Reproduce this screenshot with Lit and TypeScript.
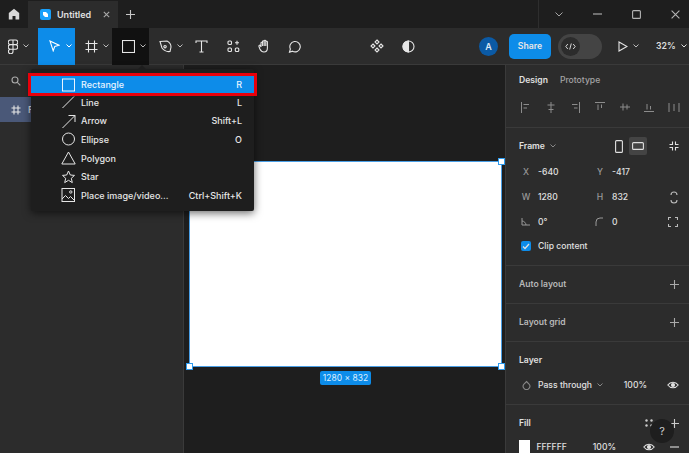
import { LitElement, html, css, svg } from 'lit';
import { customElement } from 'lit/decorators.js';

const icon = (w: number, h: number, body: unknown, sw = 1.1) => html`<svg
    width=${w}
    height=${h}
    viewBox="0 0 ${w} ${h}"
    fill="none"
    stroke="currentColor"
    stroke-width=${sw}
    aria-hidden="true"
>${body}</svg>`;

const chevron = html`<svg class="chev" width="6" height="4" viewBox="0 0 6 4" fill="none" stroke="currentColor" stroke-width="1"><path d="M.5.5 3 3 5.5.5" /></svg>`;

const plus = svg`<path d="M4.500 0v9M0 4.500h9" />`;
const eye = svg`<path d="M.8 4C3.500.3 8.500.3 11.200 4 8.500 7.700 3.500 7.700.8 4Z" /><circle cx="6" cy="4" r="1.500" fill="currentColor" />`;

const menuItems = [
    { label: 'Rectangle', key: 'R', icon: svg`<rect x="1.500" y="2" width="12" height="12" />` },
    { label: 'Line', key: 'L', icon: svg`<path d="M1.500 14 13 2.500" />` },
    { label: 'Arrow', key: 'Shift+L', icon: svg`<path d="M1.500 15 14 2.500M7.500 2.500H14V9" />` },
    { label: 'Ellipse', key: 'O', icon: svg`<circle cx="7.500" cy="8" r="6" />` },
    { label: 'Polygon', key: '', icon: svg`<path d="M7.500 2 14.200 14H.8Z" />` },
    { label: 'Star', key: '', icon: svg`<path d="m7.500 2 1.800 4 4.200.4-3.200 2.900 1 4.300-3.800-2.300-3.800 2.300 1-4.300L1.500 6.400 5.700 6Z" />` },
    {
        label: 'Place image/video...',
        key: 'Ctrl+Shift+K',
        icon: svg`<rect x="1" y="1.500" width="12.500" height="13" /><path d="m1 12 3.500-3.500 3 3 2-2 4 4" /><circle cx="9.800" cy="5" r="1.200" />`,
    },
];

const alignIcons = [
    svg`<path d="M1.500 1v11M3.500 3.500H9M3.500 7H7" />`,
    svg`<path d="M6 1v11M2.500 4h7M3.500 8.500h5" />`,
    svg`<path d="M10.500 1v11M3 3.500h5.500M5 7h3.500" />`,
    svg`<path d="M1 1.500h10M4 3.500V9M7.500 3.500V7" />`,
    svg`<path d="M1 6h10M4 2.500v7M8 3.500v5" />`,
    svg`<path d="M1 10.500h10M4 3v5.500M7.500 5v3.500" />`,
];

@customElement('app-root')
export class AppRoot extends LitElement {
    static override styles = css`
        :host {
            display: block;
            width: 689px;
            height: 453px;
            overflow: hidden;
            position: relative;
            background: #1e1e1e;
            color: #fff;
            font-family: Inter, 'Liberation Sans', sans-serif;
            font-size: 9px;
            font-weight: 500;
        }

        svg {
            display: block;
            flex: none;
        }

        .titlebar {
            height: 28px;
            display: flex;
            align-items: center;
            background: #1e1e1e;
            color: #c8c8c8;
        }
        .home {
            width: 28px;
            display: flex;
            justify-content: center;
            color: #d8d8d8;
        }
        .tab {
            width: 90px;
            height: 27px;
            margin-top: 1px;
            box-sizing: border-box;
            padding-left: 12px;
            display: flex;
            align-items: center;
            background: #2c2c2c;
            color: #e0e0e0;
            font-weight: 600;
        }
        .tab-logo {
            width: 11px;
            height: 11px;
            border-radius: 2px;
            background: #18a0fb;
            margin-right: 6px;
            display: grid;
            place-items: center;
            color: #fff;
        }
        .tab-close {
            margin-left: 12px;
            color: #aaa;
        }
        .new-tab {
            margin-left: 8px;
        }
        .win {
            margin-left: auto;
            width: 151px;
            height: 28px;
            border-left: 1px solid #2e2e2e;
            box-sizing: border-box;
            display: grid;
            grid-template-columns: repeat(4, 39px);
            place-items: center;
            color: #b4b4b4;
        }

        .toolbar {
            height: 37px;
            box-sizing: border-box;
            display: flex;
            align-items: center;
            background: #2c2c2c;
            border-bottom: 1px solid #3a3a3a;
            color: #e6e6e6;
        }
        .tool {
            height: 37px;
            box-sizing: border-box;
            display: flex;
            align-items: center;
            gap: 5px;
            flex: none;
        }
        .tool .chev {
            color: #bbb;
        }
        .tool.center {
            justify-content: center;
        }
        .tool.w38 {
            width: 38px;
            padding-left: 8px;
        }
        .tool.w37 {
            width: 37px;
            padding-left: 10px;
        }
        .tool.w36 {
            width: 36px;
            padding-left: 10px;
        }
        .tool.active {
            background: #0d8ce9;
            color: #fff;
            padding-left: 11px;
            gap: 6px;
        }
        .tool.active .chev {
            color: #fff;
        }
        .tool.open {
            background: #111;
        }
        .tool.w32 {
            width: 32px;
        }
        .tool.w30 {
            width: 30px;
        }
        .view-tools {
            margin-left: 61px;
            display: flex;
            align-items: center;
            gap: 18px;
        }
        .avatar {
            width: 19px;
            height: 19px;
            border-radius: 50%;
            background: #0b5aa5;
            display: grid;
            place-items: center;
            font-size: 9px;
            font-weight: 600;
            color: #dbe8f5;
            margin-left: 64px;
        }
        .share {
            width: 42px;
            height: 25px;
            margin-left: 11px;
            border-radius: 5px;
            background: #0d8ce9;
            display: grid;
            place-items: center;
            font-weight: 600;
            font-size: 8.7px;
        }
        .devmode {
            width: 44px;
            height: 25px;
            margin-left: 7px;
            border-radius: 13px;
            background: #444;
            display: flex;
            align-items: center;
            padding-left: 3px;
            box-sizing: border-box;
        }
        .devmode span {
            width: 19px;
            height: 19px;
            border-radius: 50%;
            background: #2c2c2c;
            display: grid;
            place-items: center;
        }
        .play {
            margin-left: 16px;
        }
        .zoom {
            margin-left: 17px;
            display: flex;
            align-items: center;
            gap: 5px;
            font-size: 8.7px;
            font-weight: 600;
            color: #ddd;
        }

        .main {
            height: 388px;
            display: flex;
        }
        .layers {
            width: 184px;
            flex: none;
            background: #2c2c2c;
            border-right: 1px solid #3a3a3a;
            box-sizing: border-box;
            color: #aaa;
        }
        .search {
            height: 32px;
            padding-left: 11px;
            display: flex;
            align-items: center;
        }
        .layer-row {
            height: 25px;
            background: #4a5878;
            display: flex;
            align-items: center;
            gap: 7px;
            padding-left: 11px;
            color: #e6e6e6;
        }
        .canvas {
            flex: 1;
            position: relative;
            background: #1e1e1e;
        }
        .frame {
            position: absolute;
            left: 5px;
            top: 96px;
            width: 311px;
            height: 204px;
            background: #fff;
            border: 1px solid #4a9fe6;
        }
        .handle {
            position: absolute;
            width: 5px;
            height: 5px;
            background: #fff;
            border: 1px solid #2d9bef;
        }
        .handle.tl { left: -4px; top: -4px; }
        .handle.tr { right: -4px; top: -4px; }
        .handle.bl { left: -4px; bottom: -4px; }
        .handle.br { right: -4px; bottom: -4px; }
        .size {
            position: absolute;
            left: 136px;
            top: 306px;
            width: 51px;
            height: 14px;
            line-height: 14px;
            text-align: center;
            border-radius: 2px;
            background: #0d8ce9;
            color: #dbeeff;
            font-size: 8.5px;
            font-weight: 400;
            white-space: nowrap;
        }

        .panel {
            width: 184px;
            flex: none;
            box-sizing: border-box;
            background: #2c2c2c;
            border-left: 1px solid #3a3a3a;
            color: #e0e0e0;
            font-size: 8.6px;
        }
        .tabs {
            display: flex;
            gap: 12px;
            padding: 10px 13px 0;
            height: 32px;
            box-sizing: border-box;
            font-weight: 600;
        }
        .tabs .off {
            color: #a4a4a4;
            font-weight: 500;
        }
        .align {
            height: 31px;
            padding: 0 0 9px 14px;
            box-sizing: border-box;
            display: flex;
            align-items: center;
            gap: 12.700px;
            color: #8c8c8c;
            border-bottom: 1px solid #3a3a3a;
        }
        .section {
            border-bottom: 1px solid #3a3a3a;
            padding: 0 10px 0 13px;
            box-sizing: border-box;
        }
        .head {
            height: 37px;
            display: flex;
            align-items: center;
            justify-content: space-between;
            font-weight: 600;
        }
        .head.muted {
            color: #b8b8b8;
        }
        .head .plus {
            color: #aaa;
        }
        .frame-head {
            height: 36px;
            margin-bottom: -4px;
            display: flex;
            align-items: center;
            font-weight: 600;
            gap: 5px;
        }
        .frame-head .chev {
            color: #888;
        }
        .orient {
            margin-left: auto;
            display: flex;
            align-items: center;
            gap: 6px;
            margin-right: 17px;
        }
        .orient .on {
            width: 18px;
            height: 18px;
            background: #444;
            border-radius: 2px;
            display: grid;
            place-items: center;
        }
        .fields {
            display: grid;
            grid-template-columns: 74px 74px 1fr;
            grid-auto-rows: 24.7px;
            align-items: center;
            margin-bottom: 6px;
        }
        .field {
            display: flex;
            align-items: center;
        }
        .field b {
            width: 14px;
            margin-right: 5px;
            text-align: center;
            color: #999;
            font-weight: 500;
        }
        .field svg {
            margin: 0 7px 0 1px;
            color: #999;
        }
        .corner {
            justify-self: end;
            margin-right: 1px;
            color: #bbb;
        }
        .clip {
            grid-column: 1 / -1;
            display: flex;
            align-items: center;
            gap: 7px;
            padding-left: 2px;
        }
        .check {
            width: 10px;
            height: 10px;
            border-radius: 2px;
            background: #0d8ce9;
            display: grid;
            place-items: center;
        }
        .layer-props {
            display: flex;
            align-items: center;
            height: 25px;
            margin-bottom: 6px;
            margin-top: -6px;
            padding-left: 3px;
            gap: 5px;
        }
        .layer-props .mode {
            margin-left: 2px;
        }
        .layer-props .pct {
            margin-left: auto;
            margin-right: 15px;
        }
        .layer-props .chev,
        .layer-props .drop {
            color: #888;
        }
        .fill-row {
            display: flex;
            align-items: center;
            height: 24px;
            margin-top: -7px;
        }
        .fill-actions {
            display: flex;
            align-items: center;
            gap: 17px;
            color: #ccc;
        }
        .swatch {
            width: 13px;
            height: 13px;
            background: #fff;
            margin-right: 6px;
        }
        .fill-pct {
            margin-left: 26px;
            margin-right: 27px;
        }
        .fill-remove {
            margin-left: 15px;
        }
        .last {
            border-bottom: 0;
        }

        .help {
            position: absolute;
            right: 15px;
            bottom: 10px;
            width: 24px;
            height: 24px;
            border-radius: 50%;
            background: #1e1e1e;
            color: #ccc;
            display: grid;
            place-items: center;
            font-size: 11px;
            font-weight: 400;
        }

        .menu {
            position: absolute;
            left: 31px;
            top: 69px;
            width: 223px;
            height: 142px;
            box-sizing: border-box;
            padding-top: 7px;
            background: #1e1e1e;
            border-radius: 2px;
            box-shadow: 0 2px 8px rgba(0, 0, 0, 0.6);
            color: #e6e6e6;
            font-size: 9px;
        }
        .caret {
            position: absolute;
            left: 107px;
            top: -4px;
            width: 0;
            height: 0;
            border-left: 4px solid transparent;
            border-right: 4px solid transparent;
            border-bottom: 4px solid #1e1e1e;
        }
        .item {
            height: 18.6px;
            display: flex;
            align-items: center;
            padding: 0 12px 0 30px;
        }
        .item svg {
            margin-right: 4px;
        }
        .item .key {
            margin-left: auto;
        }
        .item.hot {
            background: #0d8ce9;
            color: #e8f4ff;
            outline: 3px solid #e8000b;
            position: relative;
            height: 17px;
        }
    `;

    private _renderMenu() {
        return html`<div class="menu">
            <div class="caret"></div>
            ${menuItems.map(
                (m, i) => html`<div class="item ${i === 0 ? 'hot' : ''}">
                    ${icon(16, 16, m.icon, 1)}
                    <span>${m.label}</span>
                    <span class="key">${m.key}</span>
                </div>`,
            )}
        </div>`;
    }

    private _renderToolbar() {
        return html`<div class="toolbar">
            <div class="tool w38">
                ${icon(10, 15, svg`<path d="M5 1H2.500a2.300 2.300 0 0 0 0 4.600H5ZM5 1h2.500a2.300 2.300 0 0 1 0 4.600H5ZM5 5.600H2.500a2.300 2.300 0 0 0 0 4.600H5ZM5 5.600h2.500a2.300 2.300 0 0 1 0 4.600H5ZM5 10.200H2.500A2.300 2.300 0 1 0 5 12.500Z" />`)}
                ${chevron}
            </div>
            <div class="tool w37 active">
                ${icon(11, 12, svg`<path d="M1 1 10 5.200 5.800 6.400 4.200 10.800Z" />`)} ${chevron}
            </div>
            <div class="tool w37">
                ${icon(13, 13, svg`<path d="M3.500.5v12M9.500.5v12M.5 3.500h12M.5 9.500h12" />`)} ${chevron}
            </div>
            <div class="tool w37 open">
                ${icon(13, 13, svg`<rect x=".5" y=".5" width="12" height="12" />`)} ${chevron}
            </div>
            <div class="tool w36">
                ${icon(13, 13, svg`<path d="M1 1.500 8 1c2.500 1.200 4 3.500 4 6l-1 4.500c-3 .5-6-1-8-3.500ZM6 5.500a1.200 1.200 0 1 0 .1 0" />`)} ${chevron}
            </div>
            <div class="tool w32 center">
                ${icon(13, 13, svg`<path d="M1 3V1h11v2M6.500 1v11M4.500 12h4" />`)}
            </div>
            <div class="tool w32 center">
                ${icon(13, 13, svg`<rect x="1" y="1" width="3.500" height="3.500" rx="1" /><path d="M8 2.800h4M10 .8v4" /><rect x="1" y="8" width="3.500" height="3.500" rx="1" /><rect x="8.300" y="8" width="3.500" height="3.500" rx="1" />`)}
            </div>
            <div class="tool w30 center">
                ${icon(13, 14, svg`<path d="M3 8V4a.8.800 0 0 1 1.600 0v3V2.500a.8.800 0 0 1 1.600 0V7V2a.8.800 0 0 1 1.600 0v5V3a.8.800 0 0 1 1.600 0v6c0 2.500-1.300 4-3.500 4-2 0-3-1-4-3L1 7.500c-.5-1 .8-1.700 1.300-1Z" />`)}
            </div>
            <div class="tool w30 center">
                ${icon(13, 13, svg`<path d="M1.500 12.200 2.400 9A5.200 5.200 0 1 1 4.500 11.200Z" />`)}
            </div>
            <div class="view-tools">
                ${icon(14, 14, svg`<path d="M7 1 9 3 7 5 5 3ZM3 5 5 7 3 9 1 7ZM11 5l2 2-2 2-2-2ZM7 9l2 2-2 2-2-2Z" />`)}
                ${icon(13, 13, svg`<circle cx="6.500" cy="6.500" r="5.500" /><path d="M6.500 1a5.500 5.500 0 0 0 0 11Z" fill="currentColor" />`)}
            </div>
            <div class="avatar">A</div>
            <div class="share">Share</div>
            <div class="devmode">
                <span>${icon(11, 7, svg`<path d="M2.800 1 .8 3.500l2 2.500M8.200 1l2 2.500-2 2.500M6.300.5 4.700 6.500" />`, 0.9)}</span>
            </div>
            <div class="tool play">
                ${icon(10, 11, svg`<path d="M1 1 9 5.500 1 10Z" />`)} ${chevron}
            </div>
            <div class="zoom">32% ${chevron}</div>
        </div>`;
    }

    private _renderPanel() {
        return html`<aside class="panel">
            <div class="tabs"><span>Design</span><span class="off">Prototype</span></div>
            <div class="align">
                ${alignIcons.map((a) => icon(12, 13, a, 1))}
                ${icon(13, 13, svg`<path d="M1 2v9M6 3v7M11 2v9" />`, 1)}
            </div>
            <div class="section">
                <div class="frame-head">
                    Frame ${chevron}
                    <div class="orient">
                        ${icon(8, 13, svg`<rect x=".6" y=".6" width="6.800" height="11.800" rx="1" />`)}
                        <span class="on">${icon(12, 8, svg`<rect x=".6" y=".6" width="10.800" height="6.800" rx="1" />`)}</span>
                    </div>
                    ${icon(10, 10, svg`<path d="M3.500.5v3h-3M6.500.5v3h3M3.500 9.500v-3h-3M6.500 9.500v-3h3" />`)}
                </div>
                <div class="fields">
                    <div class="field"><b>X</b>-640</div>
                    <div class="field"><b>Y</b>-417</div>
                    <span></span>
                    <div class="field"><b>W</b>1280</div>
                    <div class="field"><b>H</b>832</div>
                    <div class="corner">${icon(8, 13, svg`<path d="M1 4a3 3 0 0 1 6 0M1 9a3 3 0 0 0 6 0" />`)}</div>
                    <div class="field">${icon(11, 9, svg`<path d="M2 1v7h8M2 4c2 0 4 2 4 4" />`, 1)}0°</div>
                    <div class="field">${icon(11, 9, svg`<path d="M2 9V5a4 4 0 0 1 4-4h3" />`, 1)}0</div>
                    <div class="corner">${icon(10, 10, svg`<path d="M.5 3V.5H3M7 .5h2.500V3M9.500 7v2.500H7M3 9.500H.5V7" />`)}</div>
                    <div class="clip">
                        <span class="check">${icon(8, 7, svg`<path d="m1 3.500 2 2L7 1" />`, 1.3)}</span>
                        Clip content
                    </div>
                </div>
            </div>
            <div class="section">
                <div class="head muted">Auto layout <span class="plus">${icon(9, 9, plus)}</span></div>
            </div>
            <div class="section">
                <div class="head muted">Layout grid <span class="plus">${icon(9, 9, plus)}</span></div>
            </div>
            <div class="section">
                <div class="head">Layer</div>
                <div class="layer-props">
                    <span class="drop">${icon(9, 10, svg`<path d="M4.500 1.500 7 4a3.300 3.300 0 1 1-5 0Z" />`)}</span>
                    <span class="mode">Pass through</span> ${chevron}
                    <span class="pct">100%</span>
                    ${icon(12, 8, eye)}
                </div>
            </div>
            <div class="section last">
                <div class="head">
                    Fill
                    <span class="fill-actions">
                        ${icon(8, 8, svg`<g fill="currentColor" stroke="none"><circle cx="1.500" cy="1.500" r="1.200" /><circle cx="6.500" cy="1.500" r="1.200" /><circle cx="1.500" cy="6.500" r="1.200" /><circle cx="6.500" cy="6.500" r="1.200" /></g>`)}
                        ${icon(9, 9, plus)}
                    </span>
                </div>
                <div class="fill-row">
                    <span class="swatch"></span>
                    FFFFFF
                    <span class="fill-pct">100%</span>
                    ${icon(12, 8, eye)}
                    <span class="fill-remove">${icon(9, 2, svg`<path d="M0 1h9" />`)}</span>
                </div>
            </div>
        </aside>`;
    }

    override render() {
        return html`
            <div class="titlebar">
                <div class="home">
                    ${icon(12, 12, svg`<path d="M6 .8.8 5v6.500h3.700V8h3v3.500h3.700V5Z" fill="currentColor" stroke="none" />`)}
                </div>
                <div class="tab">
                    <span class="tab-logo">${icon(7, 7, svg`<path d="M1 1h3l2 2v3H3L1 4Z" fill="currentColor" stroke="none" />`)}</span>
                    <span>Untitled</span>
                    <span class="tab-close">${icon(7, 7, svg`<path d="m.8.800 5.400 5.400M6.200.800.8 6.200" />`)}</span>
                </div>
                <span class="new-tab">${icon(9, 9, plus)}</span>
                <div class="win">
                    ${icon(8, 5, svg`<path d="m.5.500 3.500 3.500L7.500.5" />`, 0.9)}
                    ${icon(9, 2, svg`<path d="M0 1h9" />`)}
                    ${icon(9, 9, svg`<rect x=".6" y=".6" width="7.800" height="7.800" rx="1" />`)}
                    ${icon(9, 9, svg`<path d="m.6.600 7.800 7.800M8.400.600.6 8.400" />`)}
                </div>
            </div>
            ${this._renderToolbar()}
            <div class="main">
                <div class="layers">
                    <div class="search">
                        ${icon(10, 10, svg`<circle cx="4" cy="4" r="3" /><path d="m6.300 6.300 3 3" />`)}
                    </div>
                    <div class="layer-row">
                        ${icon(10, 10, svg`<path d="M3 .5v9M7 .5v9M.5 3h9M.5 7h9" />`)} <span>Frame 1</span>
                    </div>
                </div>
                <div class="canvas">
                    <div class="frame">
                        <span class="handle tl"></span><span class="handle tr"></span>
                        <span class="handle bl"></span><span class="handle br"></span>
                    </div>
                    <div class="size">1280 × 832</div>
                </div>
                ${this._renderPanel()}
            </div>
            ${this._renderMenu()}
            <div class="help">?</div>
        `;
    }
}
